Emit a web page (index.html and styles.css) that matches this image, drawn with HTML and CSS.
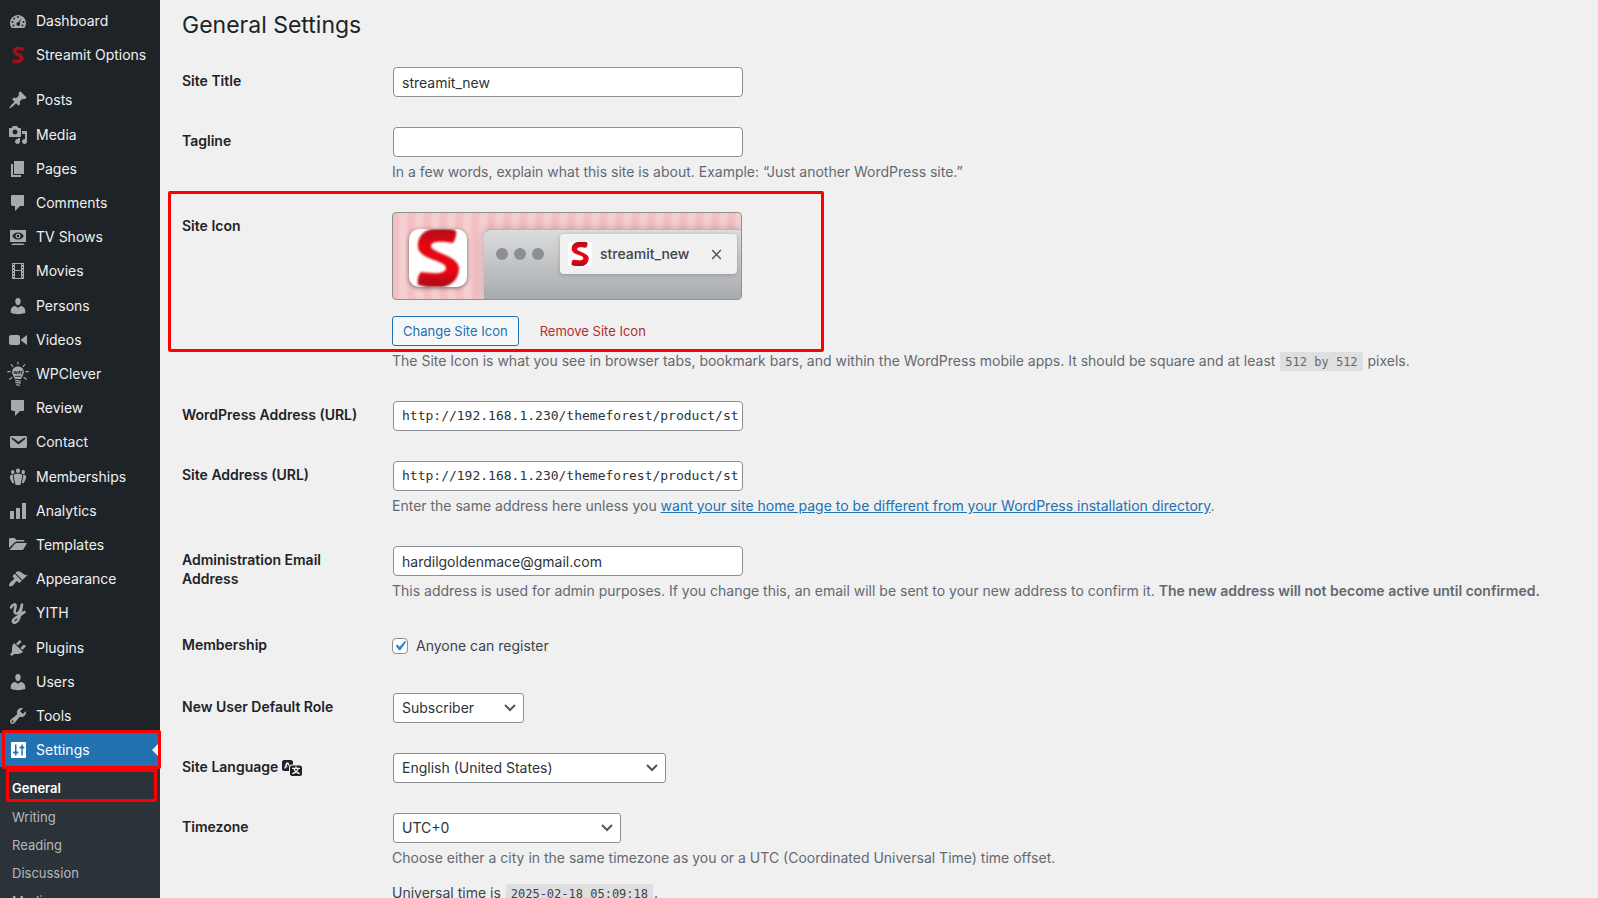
FILE: index.html
```
<!DOCTYPE html>
<html lang="en">
<head>
<meta charset="utf-8">
<title>General Settings</title>
<link rel="stylesheet" href="styles.css">
</head>
<body>
<svg class="defs" aria-hidden="true">
  <symbol id="i-person" viewBox="0 0 20 20"><path d="M10 9.25c-2.27 0-2.73-3.44-2.73-3.44C7 4.02 7.82 2 9.97 2c2.16 0 2.98 2.02 2.71 3.81 0 0-.41 3.44-2.68 3.44zm0 2.57L12.72 10c2.39 0 4.52 2.33 4.52 4.53v2.49s-3.65 1.13-7.24 1.13c-3.65 0-7.24-1.13-7.24-1.13v-2.49c0-2.25 1.94-4.48 4.47-4.48z"/></symbol>
  <symbol id="i-bubble" viewBox="0 0 20 20"><path d="M4 2h11c.6 0 1 .4 1 1v9c0 .6-.4 1-1 1h-3l-5 5v-5H5c-1.100 0-2-.9-2-2V3c0-.6.4-1 1-1z"/></symbol>
  <symbol id="i-s" viewBox="0 0 20 20"><path d="M15.600 4.600C13.500 3.600 7.200 2.200 6.400 5.800C5.700 9 14.300 9.800 13.800 13.600C13.300 17.200 7.600 16.600 4.600 15.900" fill="none" stroke="currentColor" stroke-width="3.600"/></symbol>
</svg>
<div class="layout">
  <nav class="sidebar" aria-label="Main menu">
    <ul class="menu">
      <li><a href="#"><svg class="icon" viewBox="0 0 20 20"><path fill-rule="evenodd" d="M3.760 17h12.480c1.070-1.390 1.720-3.130 1.720-5.030C17.960 7.500 14.400 3.900 10 3.900S2.040 7.500 2.040 11.970c0 1.900.65 3.640 1.720 5.030zM10 5a1 1 0 1 0 0 2 1 1 0 0 0 0-2zM6.200 6.400a1 1 0 1 0 0 2 1 1 0 0 0 0-2zm7.600 0-3 4.700c-1.300-.3-2.400.6-2.400 1.900 0 1.100.8 2 1.900 2s2-1 1.800-2.200c0-.5-.2-.8-.4-1.100zM4.500 10a1 1 0 1 0 0 2 1 1 0 0 0 0-2zm11 0a1 1 0 1 0 0 2 1 1 0 0 0 0-2zM5.500 13.600a1 1 0 1 0 0 2 1 1 0 0 0 0-2zm9 0a1 1 0 1 0 0 2 1 1 0 0 0 0-2z"/></svg>Dashboard</a></li>
      <li><a href="#"><svg class="icon icon-brand"><use href="#i-s"/></svg>Streamit Options</a></li>
      <li class="separator"></li>
      <li><a href="#"><svg class="icon" viewBox="0 0 20 20"><path d="M10.440 3.020l1.820-1.820 6.360 6.350-1.830 1.820c-1.050-.68-2.480-.57-3.410.36l-.75.75c-.92.93-1.040 2.350-.35 3.410l-1.830 1.820-2.410-2.410-2.800 2.790c-.42.42-3.380 2.710-3.800 2.290s1.860-3.390 2.280-3.810l2.790-2.790L4.100 9.360l1.830-1.820c1.050.69 2.480.57 3.400-.36l.75-.75c.93-.92 1.050-2.350.36-3.410z"/></svg>Posts</a></li>
      <li><a href="#"><svg class="icon" viewBox="0 0 20 20"><path fill-rule="evenodd" d="M13 11V4c0-.55-.45-1-1-1h-1.670L9 1H5L3.670 3H2c-.55 0-1 .45-1 1v7c0 .55.45 1 1 1h10c.55 0 1-.45 1-1zM7 4.500c1.380 0 2.500 1.120 2.500 2.500S8.380 9.500 7 9.500 4.500 8.380 4.500 7 5.620 4.500 7 4.500zM14 6h5v10.500c0 1.380-1.120 2.500-2.500 2.500S14 17.880 14 16.500s1.120-2.500 2.500-2.500c.17 0 .34.02.5.050V9h-3V6zm-4 8.050V13h2v3.500c0 1.380-1.120 2.500-2.500 2.500S7 17.880 7 16.500 8.120 14 9.500 14c.17 0 .34.02.5.050z"/></svg>Media</a></li>
      <li><a href="#"><svg class="icon" viewBox="0 0 20 20"><path d="M6 15V2h10v13H6zm-1 1h8v2H3V5h2v11z"/></svg>Pages</a></li>
      <li><a href="#"><svg class="icon"><use href="#i-bubble"/></svg>Comments</a></li>
      <li><a href="#"><svg class="icon" viewBox="0 0 20 20"><path fill-rule="evenodd" d="M2 3h16v12H2zm8 2.500C6.800 5.500 5 7.500 4.300 9c.7 1.500 2.500 3.500 5.700 3.500s5-2 5.700-3.500C15 7.500 13.200 5.500 10 5.500zm0 1a2.500 2.500 0 1 1 0 5 2.500 2.500 0 0 1 0-5zm0 1.300a1.200 1.200 0 1 0 0 2.400 1.200 1.200 0 0 0 0-2.400zM5 16.500l-2 1.500h14l-2-1.500z"/></svg>TV Shows</a></li>
      <li><a href="#"><svg class="icon" viewBox="0 0 20 20"><path fill-rule="evenodd" d="M4 2h12v16H4zm1 1v1h1V3zm0 3v1h1V6zm0 3v1h1V9zm0 3v1h1v-1zm0 3v1h1v-1zM14 3v1h1V3zm0 3v1h1V6zm0 3v1h1V9zm0 3v1h1v-1zm0 3v1h1v-1zM7 3v6h6V3zm0 7v7h6v-7z"/></svg>Movies</a></li>
      <li><a href="#"><svg class="icon"><use href="#i-person"/></svg>Persons</a></li>
      <li><a href="#"><svg class="icon" viewBox="0 0 20 20"><path d="M12 13V7c0-1.100-.9-2-2-2H3c-1.100 0-2 .9-2 2v6c0 1.100.9 2 2 2h7c1.100 0 2-.9 2-2zm1-2.500l6 4.500V5l-6 4.500v1z"/></svg>Videos</a></li>
      <li><a href="#"><svg class="icon icon-wide" viewBox="0 0 24 28"><path d="M12 6c3.700 0 6.300 2.600 6.300 6 0 3.200-2.300 4.500-3 7.500H8.700c-.7-3-3-4.300-3-7.500 0-3.400 2.600-6 6.300-6z"/><path d="M7.500 11l1 3 1-3 1 3 1-3m1.500 3.300V11h1.200v1.800h-1.200M17 11h-1.200v3H17M9 16.500h6" fill="none" stroke="#1d2327" stroke-width="1"/><path d="M12 .8v3M4.500 3.500l2.200 2.800M19.500 3.500l-2.200 2.800M.5 11.500h3.500M20 11.500h3.500M2.500 20l3.500-2.500M21.500 20L18 17.500M9 20.800l6 .8m-6 1.400l6 .8m-5 1.600l4 .8" fill="none" stroke="currentColor" stroke-width="1.300"/></svg>WPClever</a></li>
      <li><a href="#"><svg class="icon"><use href="#i-bubble"/></svg>Review</a></li>
      <li><a href="#"><svg class="icon" viewBox="0 0 20 20"><path d="M3.870 4h13.250C18.370 4 19 4.590 19 5.790v8.420c0 1.190-.63 1.790-1.880 1.790H3.870c-1.250 0-1.880-.6-1.880-1.790V5.790c0-1.200.63-1.790 1.880-1.790zm6.620 8.600l6.740-5.530c.24-.2.430-.66.130-1.070-.29-.41-.82-.42-1.170-.17l-5.700 3.860L4.800 5.830c-.35-.25-.88-.24-1.170.17-.3.410-.11.870.13 1.070z"/></svg>Contact</a></li>
      <li><a href="#"><svg class="icon" viewBox="0 0 20 20"><path d="M10 1.500a2 2 0 0 1 2 2.200C12 5 11.200 6 10 6s-2-1-2-2.300a2 2 0 0 1 2-2.200zM4.700 3c1 0 1.800.8 1.800 1.900S5.700 7 4.700 7 3 6 3 4.900 3.700 3 4.700 3zm10.600 0c1 0 1.700.8 1.700 1.900S16.300 7 15.300 7s-1.800-1-1.800-2.100S14.300 3 15.300 3zM8 6.800h4c1.600 0 2.300 1.200 2.300 2.600l-1.100 5-.8 3.600H7.600l-.8-3.600-1.100-5C5.700 8 6.400 6.800 8 6.800zM3.800 7.800h1.400c-.5.900-.5 1.700-.3 2.400l1.300 6.100H4.400L2 11.500c-.4-2 .3-3.700 1.800-3.700zm11 0h1.400c1.500 0 2.200 1.700 1.800 3.700l-2.400 4.800h-1.800l1.300-6.100c.2-.7.200-1.500-.3-2.400z"/></svg>Memberships</a></li>
      <li><a href="#"><svg class="icon" viewBox="0 0 20 20"><path d="M18 18V2h-4v16h4zm-6 0V7H8v11h4zm-6 0v-8H2v8h4z"/></svg>Analytics</a></li>
      <li><a href="#"><svg class="icon" viewBox="0 0 20 20"><path d="M16.500 6.500H8.800c-.7 0-1.400.3-1.900.8L1 13V4.500C1 3.500 1.700 3 2.500 3h4L8.500 5H15c1 0 1.500.6 1.500 1.500zM8.500 8H19l-3.500 6.200c-.4.600-1 .8-1.600.8H1.500l5.700-6.400c.4-.4.800-.6 1.300-.6z"/></svg>Templates</a></li>
      <li><a href="#"><svg class="icon" viewBox="0 0 20 20"><path d="M14.480 11.060L7.410 3.990l1.500-1.500c.5-.56 2.300-.47 3.510.32 1.210.8 1.430 1.280 2.910 2.100 1.180.64 2.450 1.260 4.450.85zm-.71.71L6.700 4.700 4.930 6.470c-.39.390-.39 1.020 0 1.410l1.060 1.060c.39.390.39 1.030 0 1.420-.6.600-1.430 1.110-2.210 1.690-.35.260-.7.530-1.010.84C1.430 14.230.4 16.080 1.400 17.070c.99 1 2.840-.03 4.180-1.360.31-.31.580-.66.850-1.020.57-.78 1.080-1.610 1.690-2.210.39-.39 1.020-.39 1.410 0l1.060 1.060c.39.390 1.020.39 1.410 0z"/></svg>Appearance</a></li>
      <li><a href="#"><svg class="icon icon-tall" viewBox="0 0 20 24"><path d="M3 6.500C4.500 3 8.500 2 7.500 6 6.500 10 6 12.500 8.500 12.500 12 12.500 13 8 14 3.500 13 10 12.500 14 10.500 18.500 8.500 22.500 4 22.500 5 19.500 6 16.500 12 15 16.500 11" fill="none" stroke="currentColor" stroke-width="2.600" stroke-linecap="round" stroke-linejoin="round"/></svg>YITH</a></li>
      <li><a href="#"><svg class="icon" viewBox="0 0 20 20"><path d="M13.110 4.360L9.870 7.600 8 5.730l3.240-3.240c.35-.34 1.050-.2 1.560.32.520.51.660 1.210.31 1.550zm-8 1.770l.91-1.120 9.010 9.010-1.190.84c-.71.710-2.630 1.160-3.820 1.160H6.140L4.900 17.260c-.59.590-1.540.59-2.120 0-.59-.58-.59-1.530 0-2.120l1.240-1.240v-3.880c0-1.130.4-3.190 1.090-3.890zm7.260 3.970l3.240-3.240c.34-.35 1.040-.21 1.550.31.520.51.660 1.210.31 1.550l-3.240 3.250z"/></svg>Plugins</a></li>
      <li><a href="#"><svg class="icon"><use href="#i-person"/></svg>Users</a></li>
      <li><a href="#"><svg class="icon" viewBox="0 0 20 20"><path d="M16.680 9.770c-1.340 1.340-3.300 1.670-4.950.99l-5.410 6.520c-.99.990-2.590.99-3.580 0s-.99-2.590 0-3.570l6.520-5.420c-.68-1.650-.35-3.610.99-4.950 1.280-1.280 3.120-1.620 4.720-1.060l-2.890 2.890 2.820 2.820 2.860-2.870c.53 1.580.18 3.390-1.080 4.650zM3.810 16.210c.4.390 1.040.39 1.430 0 .4-.4.400-1.040 0-1.430-.39-.4-1.030-.4-1.430 0-.39.390-.39 1.030 0 1.430z"/></svg>Tools</a></li>
      <li class="current"><a href="#"><svg class="icon" viewBox="0 0 20 20"><path fill-rule="evenodd" d="M18 17V3c0-.55-.45-1-1-1H4c-.55 0-1 .45-1 1v14c0 .55.45 1 1 1h13c.55 0 1-.45 1-1zM8.500 11.500h1c.55 0 1 .45 1 1s-.45 1-1 1h-1V15c0 .400-.3.700-.7.700s-.8-.300-.8-.7v-1.500H6c-.55 0-1-.45-1-1s.45-1 1-1h1V5c0-.400.400-.700.800-.7s.700.300.700.700zm5-3h-1c-.55 0-1-.45-1-1s.45-1 1-1h.8V5c0-.400.300-.700.700-.7s.800.300.800.700v1.500h.7c.55 0 1 .45 1 1s-.45 1-1 1h-.7V15c0 .400-.400.700-.8.700s-.7-.300-.7-.7V8.500z"/></svg>Settings</a><span class="mark mark-settings"></span></li>
    </ul>
    <ul class="submenu">
      <li class="active"><a href="#">General</a><span class="mark mark-general"></span></li>
      <li><a href="#">Writing</a></li>
      <li><a href="#">Reading</a></li>
      <li><a href="#">Discussion</a></li>
      <li><a href="#">Media</a></li>
    </ul>
  </nav>
  <main class="content">
    <h1>General Settings</h1>
    <form class="form">
      <div class="row">
        <label class="head" for="title">Site Title</label>
        <div class="field"><input class="text" id="title" type="text" value="streamit_new"></div>
      </div>
      <div class="row">
        <label class="head" for="tagline">Tagline</label>
        <div class="field"><input class="text" id="tagline" type="text">
          <p class="hint">In a few words, explain what this site is about. Example: “Just another WordPress site.”</p></div>
      </div>
      <div class="row">
        <span class="mark mark-icon"></span>
        <div class="head">Site Icon</div>
        <div class="field">
          <div class="preview">
            <div class="app-icon"><svg viewBox="0 0 58 58"><defs><linearGradient id="sg" x1="0" y1="0" x2="0" y2="1"><stop offset="0" stop-color="#a80f18"/><stop offset=".12" stop-color="#c80a14"/><stop offset=".28" stop-color="#e60510"/><stop offset=".75" stop-color="#e60510"/><stop offset="1" stop-color="#a00e18"/></linearGradient></defs><path id="bigs" d="M47 2C45 0 40 0 34 0H24C14 1 8 9 9 18C10 31 37 31 37 39C37 45 26 45 12 43C9 46 8 51 9 56L18 58H34C44 56 50 49 50 39C49 26 22 24 22 17C22 12 32 12 44 14C46 11 48 6 47 2Z" fill="url(#sg)"/></svg></div>
            <div class="browser">
              <span class="dots"><i></i><i></i><i></i></span>
              <div class="tab">
                <span class="favicon"><svg viewBox="0 0 58 58"><use href="#bigs"/></svg></span>
                <span class="tab-title">streamit_new</span>
                <svg class="close" viewBox="0 0 10 10"><path d="M1 1l8 8M9 1L1 9" fill="none" stroke="currentColor" stroke-width="1.300"/></svg>
              </div>
            </div>
          </div>
          <div class="actions">
            <button class="change" type="button">Change Site Icon</button>
            <button class="remove" type="button">Remove Site Icon</button>
          </div>
          <p class="hint">The Site Icon is what you see in browser tabs, bookmark bars, and within the WordPress mobile apps. It should be square and at least <code>512 by 512</code> pixels.</p>
        </div>
      </div>
      <div class="row">
        <label class="head" for="wpurl">WordPress Address (URL)</label>
        <div class="field"><input class="text url" id="wpurl" type="url" value="http://192.168.1.230/themeforest/product/st"></div>
      </div>
      <div class="row">
        <label class="head" for="siteurl">Site Address (URL)</label>
        <div class="field"><input class="text url" id="siteurl" type="url" value="http://192.168.1.230/themeforest/product/st">
          <p class="hint">Enter the same address here unless you <a href="#">want your site home page to be different from your WordPress installation directory</a>.</p></div>
      </div>
      <div class="row">
        <label class="head" for="email">Administration Email Address</label>
        <div class="field"><input class="text" id="email" type="email" value="hardilgoldenmace@gmail.com">
          <p class="hint">This address is used for admin purposes. If you change this, an email will be sent to your new address to confirm it. <strong>The new address will not become active until confirmed.</strong></p></div>
      </div>
      <div class="row">
        <div class="head">Membership</div>
        <div class="field"><label class="check"><input type="checkbox" checked><svg class="tick" viewBox="0 0 20 20"><path d="M14.830 4.890l1.340.94-5.810 8.380H9.020L5.780 9.670l1.340-1.250 2.570 2.400z"/></svg>Anyone can register</label></div>
      </div>
      <div class="row">
        <label class="head" for="role">New User Default Role</label>
        <div class="field"><span class="select role"><select id="role"><option>Subscriber</option></select><svg viewBox="0 0 12 8"><path d="M1 1l5 5 5-5"/></svg></span></div>
      </div>
      <div class="row">
        <label class="head" for="lang">Site Language <svg class="translate" viewBox="0 0 20 20"><path fill-rule="evenodd" d="M2 2h7c1 0 2 1 2 2v2.500H9.500c-1.500 0-2.500 1-2.500 2.500v4H2c-1 0-2-1-2-2V4c0-1 1-2 2-2zm2.300 2.500L2 10.500h1.600l.4-1.200h1.700l.2-.8H4.500l.9-2.500 1 2c.2-.6.500-1 1.100-1.400L6.300 4.500z"/><path fill-rule="evenodd" d="M10 7.500h8c1 0 2 1 2 2V16c0 1-1 2-2 2h-8c-1 0-2-1-2-2V9.500c0-1 1-2 2-2zm3.300 1v1.300H10V11h1.500c.3 1 .9 1.900 1.600 2.600-.8.700-1.800 1.100-3 1.400l.4 1.300c1.500-.3 2.700-.9 3.600-1.800.9.900 2 1.500 3.400 1.800l.4-1.300c-1.100-.3-2-.7-2.800-1.400.7-.7 1.200-1.600 1.500-2.600H18V9.800h-3.300V8.500zM12.900 11h2.300c-.2.700-.6 1.200-1.100 1.700-.6-.5-1-1-1.200-1.700z"/></svg></label>
        <div class="field"><span class="select lang"><select id="lang"><option>English (United States)</option></select><svg viewBox="0 0 12 8"><path d="M1 1l5 5 5-5"/></svg></span></div>
      </div>
      <div class="row">
        <label class="head" for="tz">Timezone</label>
        <div class="field"><span class="select tz"><select id="tz"><option>UTC+0</option></select><svg viewBox="0 0 12 8"><path d="M1 1l5 5 5-5"/></svg></span>
          <p class="hint">Choose either a city in the same timezone as you or a UTC (Coordinated Universal Time) time offset.</p>
          <p class="time">Universal time is <code>2025-02-18 05:09:18</code>.</p></div>
      </div>
    </form>
  </main>
</div>
</body>
</html>
```
FILE: styles.css
```
* { box-sizing: border-box; }
html, body { height: 100%; }
body {
  margin: 0;
  overflow: hidden;
  background: #f0f0f1;
  color: #3c434a;
  font-family: Inter, "Liberation Sans", sans-serif;
  font-size: 14px;
  line-height: 20px;
}
.defs { position: absolute; width: 0; height: 0; }
.layout { display: flex; height: 100vh; overflow: hidden; }

/* Sidebar */
.sidebar { flex: none; width: 160px; background: #1d2327; }
.menu, .submenu { margin: 0; padding: 0; list-style: none; }
.menu { padding-top: 4px; }
.menu a {
  display: flex;
  align-items: center;
  height: 34px;
  color: #f0f0f1;
  text-decoration: none;
  white-space: nowrap;
}
.menu li:nth-child(5n+4) { margin-bottom: 1px; }
.menu .separator { height: 11px; }
.icon {
  flex: none;
  width: 20px;
  height: 20px;
  margin: 0 8px;
  color: #a7aaad;
  fill: currentColor;
}
.icon-brand { color: #9b1219; }
.icon-wide { width: 24px; height: 26px; margin: 0 6px; }
.icon-tall { height: 24px; }
.current { position: relative; background: #2271b1; }
.current .icon { color: #fff; }
.menu .current a { color: #fff; }
.current::after {
  content: "";
  position: absolute;
  top: 9px;
  right: 0;
  border: 8px solid transparent;
  border-right-color: #f0f0f1;
}
.submenu { height: 200px; padding: 7px 0; background: #2c3338; }
.submenu a {
  display: block;
  padding: 4px 12px;
  color: #b4b9be;
  font-size: 13px;
  text-decoration: none;
}
.submenu .active { position: relative; margin-bottom: 1px; }
.submenu .active a { color: #fff; font-weight: 600; }

/* Red callouts drawn over the page */
.mark {
  position: absolute;
  z-index: 2;
  border: 3px solid #f00;
  border-radius: 2px;
  pointer-events: none;
}
.mark-settings { top: -3px; left: 2px; right: -1px; height: 39px; }
.mark-general { top: -5px; left: 6px; right: 3px; height: 33px; }
.mark-icon { top: -6px; left: -14px; width: 656px; height: 161px; }

/* Content */
.content { flex: 1; min-width: 0; padding: 10px 20px 0 22px; }
h1 {
  margin: 0;
  padding-bottom: 12px;
  color: #1d2327;
  font-size: 23px;
  font-weight: 400;
  line-height: 30px;
}
.row { position: relative; display: grid; grid-template-columns: 200px 1fr; }
.head {
  padding: 19px 10px 0 0;
  color: #1d2327;
  font-weight: 600;
  line-height: 19px;
}
.field { padding: 15px 10px; }
.text {
  display: block;
  width: 350px;
  height: 30px;
  margin: 0 1px;
  padding: 0 8px;
  border: 1px solid #8c8f94;
  border-radius: 4px;
  background: #fff;
  color: #2c3338;
  font: inherit;
}
.url { padding-right: 0; padding-bottom: 2px; font-family: "DejaVu Sans Mono", monospace; font-size: 13px; }
.hint { margin: 5px 0 0; color: #646970; white-space: nowrap; }
.hint a { color: #2271b1; }
.hint strong { font-weight: 600; }
code {
  margin: 0 1px;
  padding: 3px 5px 2px;
  background: #dfdfe0;
  font-family: "DejaVu Sans Mono", monospace;
  font-size: 12px;
  line-height: 16px;
}
.time { margin: 15px 0 0; }

/* Site icon preview */
.preview {
  display: flex;
  width: 350px;
  height: 88px;
  overflow: hidden;
  border: 1px solid #8c8f94;
  border-radius: 4px;
  background: repeating-linear-gradient(90deg, #f2bfc3 0 4px, #f6cfd1 8px 12px, #f2bfc3 16px);
}
.app-icon {
  flex: none;
  width: 58px;
  height: 58px;
  margin: 16px;
  overflow: hidden;
  border-radius: 10px;
  background: #fff;
  box-shadow: 0 1px 4px rgba(0, 0, 0, .5);
}
.app-icon svg, .favicon svg { display: block; width: 100%; height: 100%; }
.app-icon svg { filter: blur(1px); }
.browser {
  display: flex;
  flex: 1;
  align-items: flex-start;
  margin-top: 16px;
  padding: 4px 4px 0 12px;
  border-top: 1px solid #b4b6b9;
  border-left: 1px solid #c8c9cb;
  border-radius: 8px 0 0;
  background: linear-gradient(#dcdcdd, #a7aaad);
  box-shadow: 0 0 10px rgba(0, 0, 0, .2);
}
.dots { display: flex; flex: 1; gap: 6px; padding-top: 14px; }
.dots i { width: 12px; height: 12px; border-radius: 50%; background: #8c8f94; }
.tab {
  display: flex;
  align-items: center;
  width: 177px;
  height: 40px;
  padding: 0 15px 0 8px;
  border-radius: 4px;
  background: #f0f0f1;
  box-shadow: 0 1px 4px rgba(0, 0, 0, .2);
}
.favicon { width: 24px; height: 24px; margin-right: 8px; background: #fff; }
.tab-title { flex: 1; color: #3c434a; font-weight: 500; }
.close { width: 11px; height: 11px; color: #50575e; }
.actions { display: flex; gap: 10px; margin-top: 16px; }
.actions button {
  height: 30px;
  padding: 0 10px;
  border: 1px solid transparent;
  border-radius: 3px;
  background: none;
  font: inherit;
  font-size: 13px;
}
.actions .change { border-color: #2271b1; background: #f6f7f7; color: #2271b1; }
.actions .remove { color: #b32d2e; }

/* Checkbox and selects */
.check { position: relative; display: flex; align-items: center; gap: 8px; padding: 5px 0 7px; }
.check input {
  appearance: none;
  width: 16px;
  height: 16px;
  margin: 0;
  border: 1px solid #8c8f94;
  border-radius: 4px;
  background: #fff;
}
.tick { position: absolute; left: -2px; top: 5px; width: 20px; height: 20px; fill: #3582c4; }
.select { position: relative; display: block; margin: 0 1px; }
.select select {
  appearance: none;
  display: block;
  width: 100%;
  height: 30px;
  padding: 0 24px 0 8px;
  border: 1px solid #8c8f94;
  border-radius: 3px;
  background: #fff;
  color: #2c3338;
  font: inherit;
}
.select svg {
  position: absolute;
  top: 11px;
  right: 8px;
  width: 12px;
  height: 8px;
  fill: none;
  stroke: #50575e;
  stroke-width: 2;
  pointer-events: none;
}
.role { width: 131px; }
.lang { width: 273px; }
.tz { width: 228px; }
.translate { width: 20px; height: 20px; margin: -4px 0; vertical-align: middle; fill: #1d2327; }
```
